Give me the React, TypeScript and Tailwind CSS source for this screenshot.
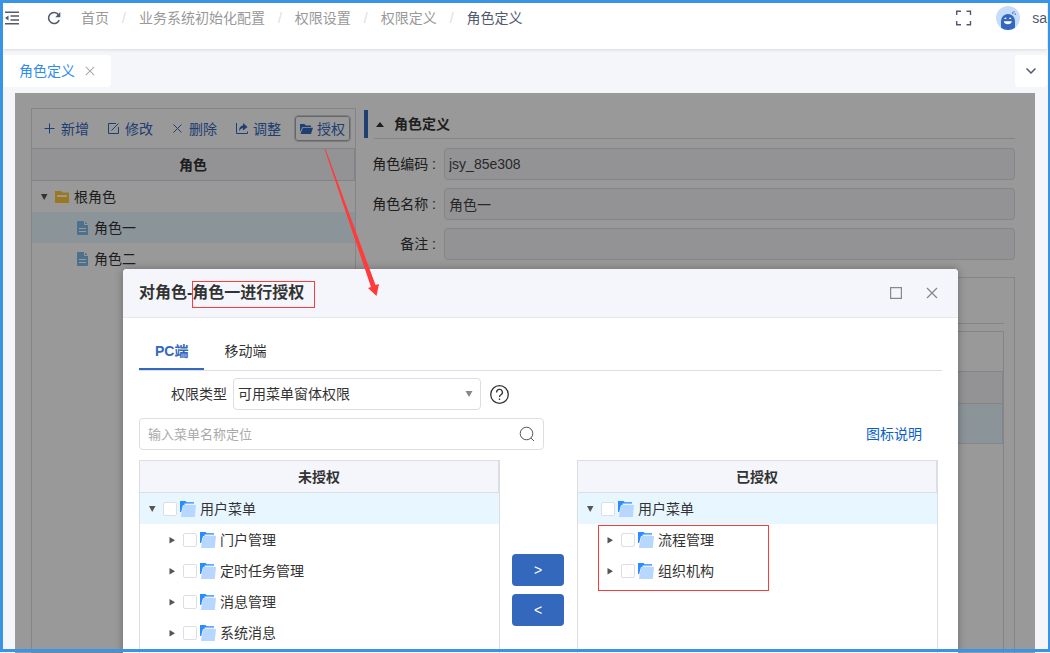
import React, { useState } from "react";

type Node = { label: string; children?: Node[] };

const crumbs = ["首页", "业务系统初始化配置", "权限设置", "权限定义", "角色定义"];

const unauthorized: Node = {
  label: "用户菜单",
  children: [
    { label: "门户管理" },
    { label: "定时任务管理" },
    { label: "消息管理" },
    { label: "系统消息" },
  ],
};

const authorized: Node = {
  label: "用户菜单",
  children: [{ label: "流程管理" }, { label: "组织机构" }],
};

function MenuIcon() {
  return (
    <svg viewBox="0 0 14 14" className="size-[14px]" fill="none" stroke="currentColor" strokeWidth="1.400" aria-hidden="true">
      <path d="M0 1.300h14M5.500 5h8.500M5.500 9h8.500M0 12.700h14" />
      <path d="M0 7 3.500 4.500v5Z" fill="currentColor" stroke="none" />
    </svg>
  );
}

function ReloadIcon() {
  return (
    <svg viewBox="0 0 14 14" className="size-[14px]" fill="none" stroke="currentColor" strokeWidth="1.600" aria-hidden="true">
      <path d="M11.500 3.700A5.500 5.500 0 1 0 12.200 9" />
      <path d="M13.300 1v5.200H8.200Z" fill="currentColor" stroke="none" />
    </svg>
  );
}

function CrossIcon({ className }: { className: string }) {
  return (
    <svg viewBox="0 0 12 12" className={className} fill="none" stroke="currentColor" strokeWidth="1.300" aria-hidden="true">
      <path d="M1 1 11 11M11 1 1 11" />
    </svg>
  );
}

function PlusIcon() {
  return (
    <svg viewBox="0 0 13 13" className="size-[13px]" fill="none" stroke="currentColor" aria-hidden="true">
      <path d="M.5 6.500h10M5.500 1.500v10" />
    </svg>
  );
}

function EditIcon() {
  return (
    <svg viewBox="0 0 13 13" className="size-[13px]" fill="none" stroke="currentColor" aria-hidden="true">
      <path d="M8 1.500H.5v10h10V5M3.500 8.500 10.500 1.500" />
    </svg>
  );
}

function DeleteIcon() {
  return (
    <svg viewBox="0 0 13 13" className="size-[13px]" fill="none" stroke="currentColor" aria-hidden="true">
      <path d="M1.500 2.500l8 8M9.500 2.500l-8 8" />
    </svg>
  );
}

function ShareIcon() {
  return (
    <svg viewBox="0 0 13 13" className="size-[13px]" fill="none" stroke="currentColor" aria-hidden="true">
      <path d="M.5 1v10.500h11V9.500" />
      <path d="M3 9.500C3 6 4.500 3.700 7 3.500V1L11.500 5 7 8.500V6.200C5 6.200 3.700 7.500 3 9.500Z" fill="currentColor" stroke="none" />
    </svg>
  );
}

function GrantIcon() {
  return (
    <svg viewBox="0 0 13 13" className="size-[13px]" fill="currentColor" aria-hidden="true">
      <path d="M0 2h4.500l1.200 1.500H11V5H2.500L0 10Z" />
      <path d="M3 5.800h10L11 12H.4Z" />
    </svg>
  );
}

function FolderIcon() {
  return (
    <svg viewBox="0 0 16 16" className="size-4 shrink-0" aria-hidden="true">
      <path d="M0 0h5.500l1.300 1.300H14V4H3L1.200 11H0Z" fill="#2b8cff" />
      <path d="M4.500 2.500h10v1.500h-10Z" fill="#e4f0ff" />
      <path d="M3.500 4H16l-1.200 12H1L1.500 12Z" fill="#b8d7ff" />
    </svg>
  );
}

function YellowFolder() {
  return (
    <svg viewBox="0 0 14 12" className="h-3 w-[14px] shrink-0" aria-hidden="true">
      <path d="M0 0h6l1.500 1.500H14V12H0Z" fill="#ffc935" />
      <path d="M2 4h10v2H2Z" fill="#fff" />
    </svg>
  );
}

function FileIcon() {
  return (
    <svg viewBox="0 0 11 14" className="h-[14px] w-[11px] shrink-0" aria-hidden="true">
      <path d="M1 0h6.500L11 3.500V13a1 1 0 0 1-1 1H1a1 1 0 0 1-1-1V1a1 1 0 0 1 1-1Z" fill="#80bdeb" />
      <path d="M7.500 0v3.500H11M2 7.500h7M2 10.500h7" stroke="#fff" fill="none" />
    </svg>
  );
}

function Avatar() {
  return (
    <svg viewBox="0 0 24 24" className="size-6" role="img" aria-label="头像">
      <circle cx="12" cy="12" r="12" fill="#c6dcfb" />
      <path d="M5 21.700V15a7 7 0 0 1 14 0v6.700A12 12 0 0 1 5 21.700Z" fill="#3468bd" />
      <path d="M7.800 15.300h8c0 3.800-8 3.800-8 0Z" fill="#fff" />
      <path d="M8.500 12.300h1.800M13.300 12.300h1.800" stroke="#fff" strokeWidth="1.200" fill="none" />
      <path d="M16.300 6.500l1 1.200M18 5.300v1M18.800 8.500l.9-.9" stroke="#3468bd" strokeWidth="1.200" fill="none" />
    </svg>
  );
}

function Arrow({ open }: { open: boolean }) {
  return (
    <svg viewBox="0 0 8 8" className="size-2 shrink-0" fill="#555" aria-hidden="true">
      {open ? <path d="M1 1h6.500L4.200 7Z" /> : <path d="M1.500 1v6.500L7 4.200Z" />}
    </svg>
  );
}

function ToolButton({ icon, label, active }: { icon: React.ReactNode; label: string; active?: boolean }) {
  return (
    <button
      type="button"
      className={
        active
          ? "flex h-[25px] items-center gap-1 rounded-[3px] border border-[#a9abb3] px-1 outline outline-[#d0d2d8]"
          : "flex h-[25px] items-center gap-1 rounded-[3px] border border-transparent px-1"
      }
    >
      {icon}
      {label}
    </button>
  );
}

function Field({ id, label, value }: { id: string; label: string; value: string }) {
  return (
    <div className="flex items-center">
      <label htmlFor={id} className="w-[72px] shrink-0 text-right whitespace-pre">
        {label + " :"}
      </label>
      <input
        id={id}
        readOnly
        defaultValue={value}
        className="ml-2 h-8 min-w-0 flex-1 rounded border border-[#dcdee4] bg-[#f5f6fa] px-1 text-[#444]"
      />
    </div>
  );
}

function TreeRow({ label, open, id, child }: { label: string; open: boolean; id: string; child?: boolean }) {
  return (
    <li className={child ? "flex h-[31px] items-center pl-7" : "flex h-[31px] items-center bg-[#e8f7ff] pl-2"}>
      <Arrow open={open} />
      <input
        id={id}
        type="checkbox"
        className="mr-[3px] ml-[7px] size-[14px] shrink-0 appearance-none rounded-[2px] border border-[#dcdee3] bg-white checked:bg-[#3468bd]"
      />
      <FolderIcon />
      <label htmlFor={id} className="ml-1">
        {label}
      </label>
    </li>
  );
}

function TreePanel({ title, root, name, marked }: { title: string; root: Node; name: string; marked?: boolean }) {
  return (
    <section className="min-h-[240px] min-w-0 flex-1 border border-b-0 border-[#dcdee3]">
      <h3 className="flex h-8 items-center justify-center border-r border-b border-[#dcdee3] bg-[#f5f6fb] font-bold">
        {title}
      </h3>
      <ul className="relative">
        <TreeRow label={root.label} open id={name + "-root"} />
        {root.children?.map((n, i) => (
          <TreeRow key={n.label} label={n.label} open={false} id={name + "-" + i} child />
        ))}
        {marked && (
          <li
            aria-hidden="true"
            className="pointer-events-none absolute top-8 left-5 h-[66px] w-[171px] border border-[#f93c3c]"
          />
        )}
      </ul>
    </section>
  );
}

function RolePage() {
  return (
    <div className="flex h-full items-stretch gap-2 px-4 pt-[15px] pr-5">
      <section className="w-[325px] shrink-0 border border-[#dcdee3]">
        <div className="flex h-10 items-center gap-[9px] border-b border-[#dcdee3] pl-[7px] text-[#3468bd]">
          <ToolButton icon={<PlusIcon />} label="新增" />
          <ToolButton icon={<EditIcon />} label="修改" />
          <ToolButton icon={<DeleteIcon />} label="删除" />
          <ToolButton icon={<ShareIcon />} label="调整" />
          <ToolButton icon={<GrantIcon />} label="授权" active />
        </div>
        <h2 className="flex h-8 items-center justify-center border-r border-b border-[#d5d9e0] bg-[#f5f6fb] font-bold">
          角色
        </h2>
        <ul>
          <li className="flex h-[31px] items-center pl-2">
            <Arrow open />
            <span className="ml-[7px]">
              <YellowFolder />
            </span>
            <span className="ml-[5px]">根角色</span>
          </li>
          <li className="flex h-[31px] items-center gap-[6px] bg-[#e8f7ff] pl-[45px]">
            <FileIcon />
            角色一
          </li>
          <li className="flex h-[31px] items-center gap-[6px] pl-[45px]">
            <FileIcon />
            角色二
          </li>
        </ul>
      </section>

      <section className="flex min-w-0 flex-1 flex-col pt-0.5">
        <div className="flex h-[29px]">
          <div className="h-7 w-1 bg-[#3468bd]" />
          <h2 className="ml-[6px] flex flex-1 items-center border-b border-[#dcdee3] pl-0.5 font-bold">
            <svg viewBox="0 0 8 5" className="mr-[10px] h-[5px] w-2" fill="#333" aria-hidden="true">
              <path d="M4 0 8 5H0Z" />
            </svg>
            角色定义
          </h2>
        </div>
        <div className="mt-[9px] flex flex-col gap-2">
          <Field id="code" label="角色编码" value="jsy_85e308" />
          <Field id="name" label="角色名称" value="角色一" />
          <Field id="note" label="备注" value="" />
        </div>
        <div className="mt-[17px] flex-1 border border-b-0 border-[#dcdee3] px-[10px]">
          <div className="h-[46px] border-b border-[#dcdee3]" />
          <div className="mt-[7px] h-full border border-[#dcdee3]">
            <div className="h-10 border-b border-[#dcdee3]" />
            <div className="h-8 border-r border-b border-[#dcdee3] bg-[#f5f6fb]" />
            <div className="h-10 border-r border-b border-[#dcdee3] bg-[#e8f7ff]" />
          </div>
        </div>
      </section>
    </div>
  );
}

function GrantDialog() {
  const [tab, setTab] = useState(0);
  return (
    <div
      role="dialog"
      aria-labelledby="grant-title"
      className="min-w-0 flex-1 rounded-t bg-white shadow-[0_0_8px_rgba(0,0,0,0.3)]"
    >
      <header className="flex h-[49px] items-center rounded-t border-b border-[#e6e8ee] bg-[#f5f6fb] px-4">
        <h1 id="grant-title" className="flex items-center text-base font-bold">
          对角色-
          <span className="relative">
            角色一进行授权
            <span
              aria-hidden="true"
              className="pointer-events-none absolute top-0 left-0 h-[27px] w-[123px] border border-[#f93c3c]"
            />
          </span>
        </h1>
        <div className="ml-auto flex items-center gap-6 pr-1 text-[#888]">
          <button type="button" aria-label="最大化" className="flex">
            <svg viewBox="0 0 12 12" className="size-3" fill="none" stroke="currentColor" aria-hidden="true">
              <path d="M.5.5h11v11H.5Z" strokeWidth="1.400" />
            </svg>
          </button>
          <button type="button" aria-label="关闭" className="flex">
            <CrossIcon className="size-3" />
          </button>
        </div>
      </header>

      <div className="px-4 pt-[13px]">
        <div role="tablist" className="flex h-10 gap-1 border-b border-[#dcdee3]">
          {["PC端", "移动端"].map((t, i) => (
            <button
              key={t}
              type="button"
              role="tab"
              aria-selected={tab === i}
              onClick={() => setTab(i)}
              className={
                tab === i
                  ? "border-b-2 border-[#3468bd] px-4 pt-0.5 font-bold text-[#3468bd]"
                  : "border-b-2 border-transparent px-4 pt-0.5"
              }
            >
              {t}
            </button>
          ))}
        </div>

        <div className="mt-[7px] flex h-8 items-center">
          <label htmlFor="kind" className="w-[88px] shrink-0 text-right">
            权限类型
          </label>
          <div className="relative ml-[6px] w-[248px]">
            <select
              id="kind"
              className="h-8 w-full appearance-none rounded border border-[#dcdee3] bg-white pr-6 pl-1"
            >
              <option>可用菜单窗体权限</option>
            </select>
            <svg
              viewBox="0 0 8 6"
              className="pointer-events-none absolute top-[13px] right-2 h-[6px] w-2"
              fill="#888"
              aria-hidden="true"
            >
              <path d="M.5 0h7L4 6Z" />
            </svg>
          </div>
          <button type="button" aria-label="帮助" className="ml-2 flex">
            <svg viewBox="0 0 21 21" className="size-[21px]" fill="none" stroke="#333" strokeWidth="1.300" aria-hidden="true">
              <circle cx="10.500" cy="10.500" r="8.800" />
              <path d="M7.600 8.400a2.900 2.900 0 1 1 4.400 2.400c-1 .7-1.500 1.100-1.500 2.200M10.500 14.500v1.600" />
            </svg>
          </button>
        </div>

        <div className="mt-2 flex items-center justify-between pr-5">
          <div className="relative w-[405px]">
            <input
              type="text"
              aria-label="输入菜单名称定位"
              placeholder="输入菜单名称定位"
              className="h-8 w-full rounded border border-[#dcdee3] pr-9 pl-2 text-[13px] placeholder:text-[#aaa]"
            />
            <svg
              viewBox="0 0 16 16"
              className="pointer-events-none absolute top-2 right-[9px] size-4"
              fill="none"
              stroke="#555"
              aria-hidden="true"
            >
              <circle cx="7.500" cy="7.500" r="6.300" />
              <path d="M12 12l3 3" />
            </svg>
          </div>
          <a href="#legend" className="text-[#0a60c8]">
            图标说明
          </a>
        </div>

        <div className="mt-[10px] flex pr-1">
          <TreePanel title="未授权" root={unauthorized} name="off" />
          <div className="flex w-[77px] shrink-0 flex-col items-start gap-2 pt-[94px] pl-3">
            <button type="button" aria-label="添加授权" className="h-8 w-[52px] rounded bg-[#3468bd] text-white">
              &gt;
            </button>
            <button type="button" aria-label="移除授权" className="h-8 w-[52px] rounded bg-[#3468bd] text-white">
              &lt;
            </button>
          </div>
          <TreePanel title="已授权" root={authorized} name="on" marked />
        </div>
      </div>
    </div>
  );
}

export default function App() {
  return (
    <div className="relative flex h-screen flex-col overflow-hidden bg-[#f5f6f9] px-[3px] font-['Liberation_Sans','Noto_Sans_CJK_SC',sans-serif] text-sm text-[#333]">
      <header className="relative flex h-[49px] shrink-0 items-start bg-white shadow-[0_1px_3px_rgba(0,21,41,0.12)]">
        <div className="flex h-9 flex-1 items-center text-[#515a6e]">
          <button type="button" aria-label="收起菜单" className="ml-0.5 flex">
            <MenuIcon />
          </button>
          <button type="button" aria-label="刷新" className="ml-[28px] flex">
            <ReloadIcon />
          </button>
          <nav aria-label="面包屑" className="ml-5 flex gap-[13px] text-[#999]">
            {crumbs.map((c, i) => (
              <React.Fragment key={c}>
                {i > 0 && <span className="text-[#dcdee2]">/</span>}
                <a href="#crumb" className={i === crumbs.length - 1 ? "text-[#515a6e]" : ""}>
                  {c}
                </a>
              </React.Fragment>
            ))}
          </nav>
          <button type="button" aria-label="全屏" className="ml-auto flex">
            <svg viewBox="0 0 16 16" className="size-4" fill="none" stroke="currentColor" strokeWidth="1.400" aria-hidden="true">
              <path d="M.7 5V1.200h4.300M10.500 1.200h4V5M14.500 11v3.800h-4M5 14.800H.7V11" />
            </svg>
          </button>
          <span className="ml-6">
            <Avatar />
          </span>
          <span className="ml-3">sa</span>
        </div>
      </header>

      <div className="flex h-11 shrink-0 items-center justify-between">
        <div className="flex h-8 items-center gap-[10px] rounded-r bg-white px-4 text-[#2d8cf0]">
          角色定义
          <button type="button" aria-label="关闭标签" className="flex text-[#aaa]">
            <CrossIcon className="size-[10px]" />
          </button>
        </div>
        <button type="button" aria-label="更多标签" className="flex size-8 items-center justify-center rounded bg-white">
          <svg viewBox="0 0 10 6" className="h-[6px] w-[10px]" fill="none" stroke="#515a6e" strokeWidth="1.500" aria-hidden="true">
            <path d="M.5.5 5 5 9.500.5" />
          </svg>
        </button>
      </div>

      <main className="relative mx-3 min-h-0 flex-1 overflow-hidden bg-white">
        <RolePage />
        <div className="absolute inset-0 flex bg-black/40 pt-44 pr-[77px] pl-[108px]">
          <GrantDialog />
        </div>
      </main>

      <svg
        viewBox="0 0 60 150"
        className="pointer-events-none absolute top-[148px] left-[320px] h-[150px] w-[60px]"
        fill="#ff3b3b"
        aria-hidden="true"
      >
        <path d="M4.500 1 5.500 1 55.500 137 59 136 56.500 148 48 140 51 139Z" />
      </svg>
      <div className="pointer-events-none absolute inset-x-0 top-0 bottom-px border-[3px] border-r-2 border-[#3a94e6]" />
    </div>
  );
}
